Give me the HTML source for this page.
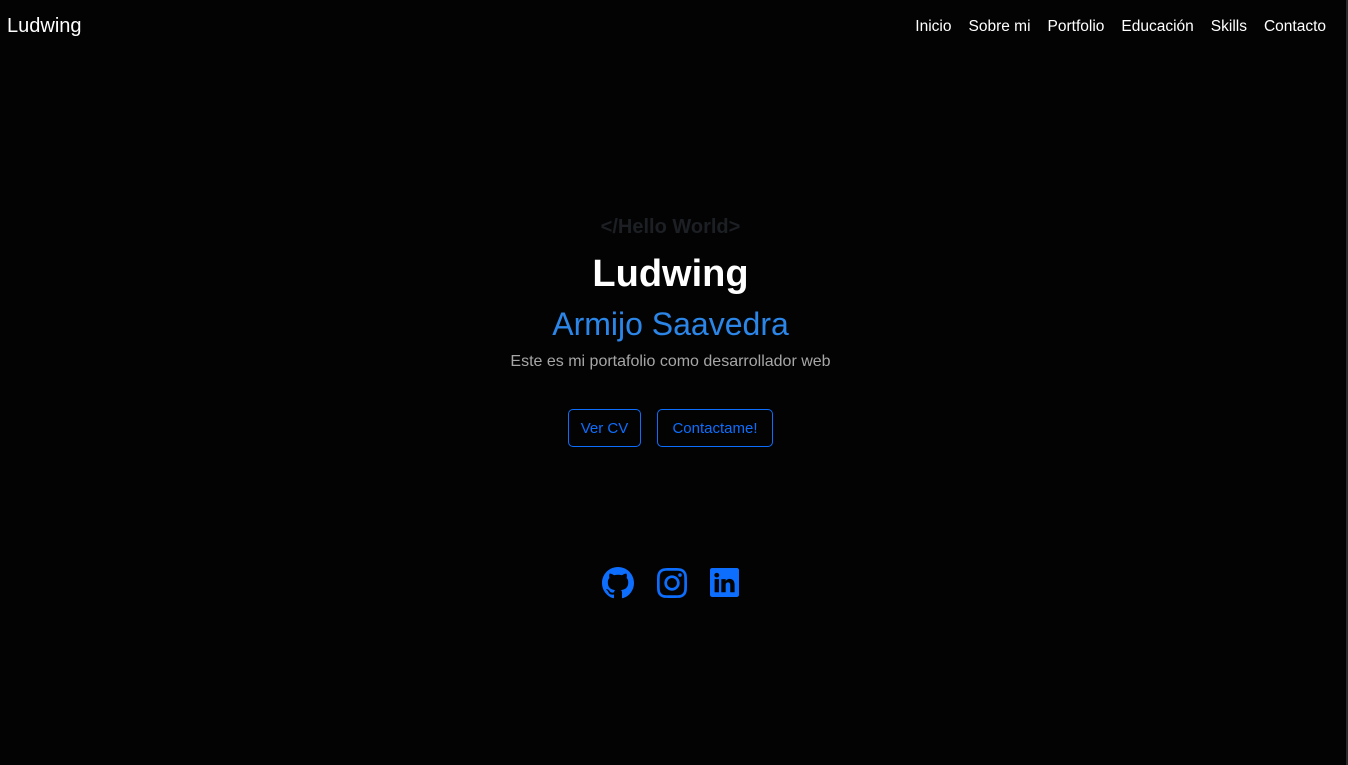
<!DOCTYPE html>
<html><head><meta charset="utf-8"><style>
html,body{margin:0;padding:0;width:1348px;height:765px;background:#030303;overflow:hidden;font-family:"Liberation Sans",sans-serif;}
.edge{position:absolute;right:0;top:0;width:2px;height:765px;background:#2a2a2a;}
.brand{position:absolute;left:7px;top:15px;color:#fff;font-size:20px;}
.nav{position:absolute;right:22px;top:18px;color:#fff;font-size:15.5px;}
.nav span{margin-left:17px;}
.c{position:absolute;left:0;width:1341px;text-align:center;}
.btn{position:absolute;top:409px;height:36px;border:1px solid #0d6efd;border-radius:5px;color:#0d6efd;font-size:15px;line-height:38px;text-align:center;box-sizing:content-box;}
svg{position:absolute;fill:#0d6efd;}
</style></head><body>
<div class="edge"></div>
<div class="brand">Ludwing</div>
<div class="nav"><span>Inicio</span><span>Sobre mi</span><span>Portfolio</span><span>Educación</span><span>Skills</span><span>Contacto</span></div>
<div class="c" style="top:216px;font-size:20px;font-weight:bold;color:#1c1f23;">&lt;/Hello World&gt;</div>
<div class="c" style="top:253px;font-size:38px;font-weight:bold;color:#fff;">Ludwing</div>
<div class="c" style="top:306px;font-size:32px;color:#2b86e8;">Armijo Saavedra</div>
<div class="c" style="top:353px;font-size:16px;color:#a6a6a6;">Este es mi portafolio como desarrollador web</div>
<div class="btn" style="left:568px;width:71px;">Ver CV</div>
<div class="btn" style="left:657px;width:114px;">Contactame!</div>
<svg style="left:602px;top:567px" width="32" height="32" viewBox="0 0 16 16"><path d="M8 0C3.58 0 0 3.58 0 8c0 3.540 2.290 6.530 5.470 7.590.4.07.55-.17.55-.38 0-.19-.01-.82-.01-1.490-2.010.37-2.530-.49-2.690-.94-.09-.23-.48-.94-.82-1.130-.28-.15-.68-.52-.01-.53.63-.01 1.080.58 1.230.82.72 1.210 1.870.87 2.330.66.07-.52.28-.87.51-1.070-1.780-.2-3.640-.89-3.640-3.950 0-.87.31-1.590.82-2.150-.08-.2-.36-1.020.08-2.120 0 0 .67-.21 2.200.82.64-.18 1.320-.27 2-.27.68 0 1.360.09 2 .27 1.530-1.040 2.200-.82 2.200-.82.44 1.100.16 1.920.08 2.120.51.56.82 1.270.82 2.150 0 3.070-1.870 3.750-3.650 3.950.29.25.54.73.54 1.480 0 1.070-.01 1.930-.01 2.200 0 .21.15.46.55.38A8.010 8.010 0 0 0 16 8c0-4.420-3.580-8-8-8z"/></svg>
<svg style="left:657px;top:568px" width="30" height="30" viewBox="0 0 16 16"><path d="M8 0C5.83 0 5.56.01 4.7.05 3.85.09 3.27.22 2.76.42a3.9 3.9 0 0 0-1.42.92A3.9 3.9 0 0 0 .42 2.76C.22 3.27.09 3.85.05 4.7.01 5.56 0 5.83 0 8s.01 2.44.05 3.3c.04.85.17 1.43.37 1.94.2.53.48.98.92 1.42.44.44.89.72 1.42.92.51.2 1.09.33 1.94.37C5.56 15.99 5.83 16 8 16s2.44-.01 3.3-.05c.85-.04 1.43-.17 1.94-.37a3.9 3.9 0 0 0 1.42-.92c.44-.44.72-.89.92-1.42.2-.51.33-1.09.37-1.94.04-.86.05-1.13.05-3.3s-.01-2.44-.05-3.3c-.04-.85-.17-1.43-.37-1.94a3.9 3.9 0 0 0-.92-1.42A3.9 3.9 0 0 0 13.24.42C12.73.22 12.15.09 11.3.05 10.44.01 10.17 0 8 0zm0 1.44c2.14 0 2.39.01 3.23.05.78.04 1.2.17 1.490.27.37.15.64.32.92.6.28.28.45.55.6.92.11.28.24.7.27 1.490.04.84.05 1.1.05 3.230s-.01 2.390-.05 3.230c-.04.78-.17 1.2-.27 1.490-.15.37-.32.64-.6.92-.28.28-.55.45-.92.6-.28.11-.7.24-1.490.27-.84.04-1.1.05-3.230.05s-2.390-.01-3.230-.05c-.78-.04-1.2-.17-1.490-.27a2.5 2.5 0 0 1-.92-.6 2.5 2.5 0 0 1-.6-.92c-.11-.28-.24-.7-.27-1.490C1.450 10.390 1.440 10.140 1.440 8s.01-2.390.05-3.230c.04-.78.17-1.2.27-1.490.15-.37.32-.64.6-.92.28-.28.55-.45.92-.6.28-.11.7-.24 1.490-.27C5.610 1.450 5.860 1.440 8 1.440zM8 3.9a4.1 4.1 0 1 0 0 8.2 4.1 4.1 0 0 0 0-8.2zm0 6.770a2.670 2.670 0 1 1 0-5.340 2.670 2.670 0 0 1 0 5.340zm5.230-6.930a.96.96 0 1 1-1.920 0 .96.96 0 0 1 1.920 0z"/></svg>
<svg style="left:710px;top:568px" width="29" height="29" viewBox="0 0 16 16"><path d="M0 1.15C0 .52.52 0 1.17 0h13.66C15.48 0 16 .52 16 1.15v13.7c0 .63-.52 1.15-1.17 1.15H1.17C.52 16 0 15.48 0 14.85V1.15zm4.94 12.24V6.17H2.54v7.22h2.4zM3.74 5.18c.84 0 1.36-.55 1.36-1.25-.02-.71-.52-1.25-1.35-1.250-.82 0-1.360.54-1.360 1.250 0 .7.52 1.250 1.330 1.250h.02zm4.910 8.210V9.360c0-.22.02-.43.08-.58.17-.43.57-.88 1.230-.88.87 0 1.210.66 1.210 1.630v3.860h2.400V9.250c0-2.220-1.180-3.250-2.760-3.250-1.270 0-1.840.7-2.160 1.200v.02h-.02l.02-.02V6.170h-2.400c.03.68 0 7.220 0 7.220h2.400z"/></svg>
</body></html>
